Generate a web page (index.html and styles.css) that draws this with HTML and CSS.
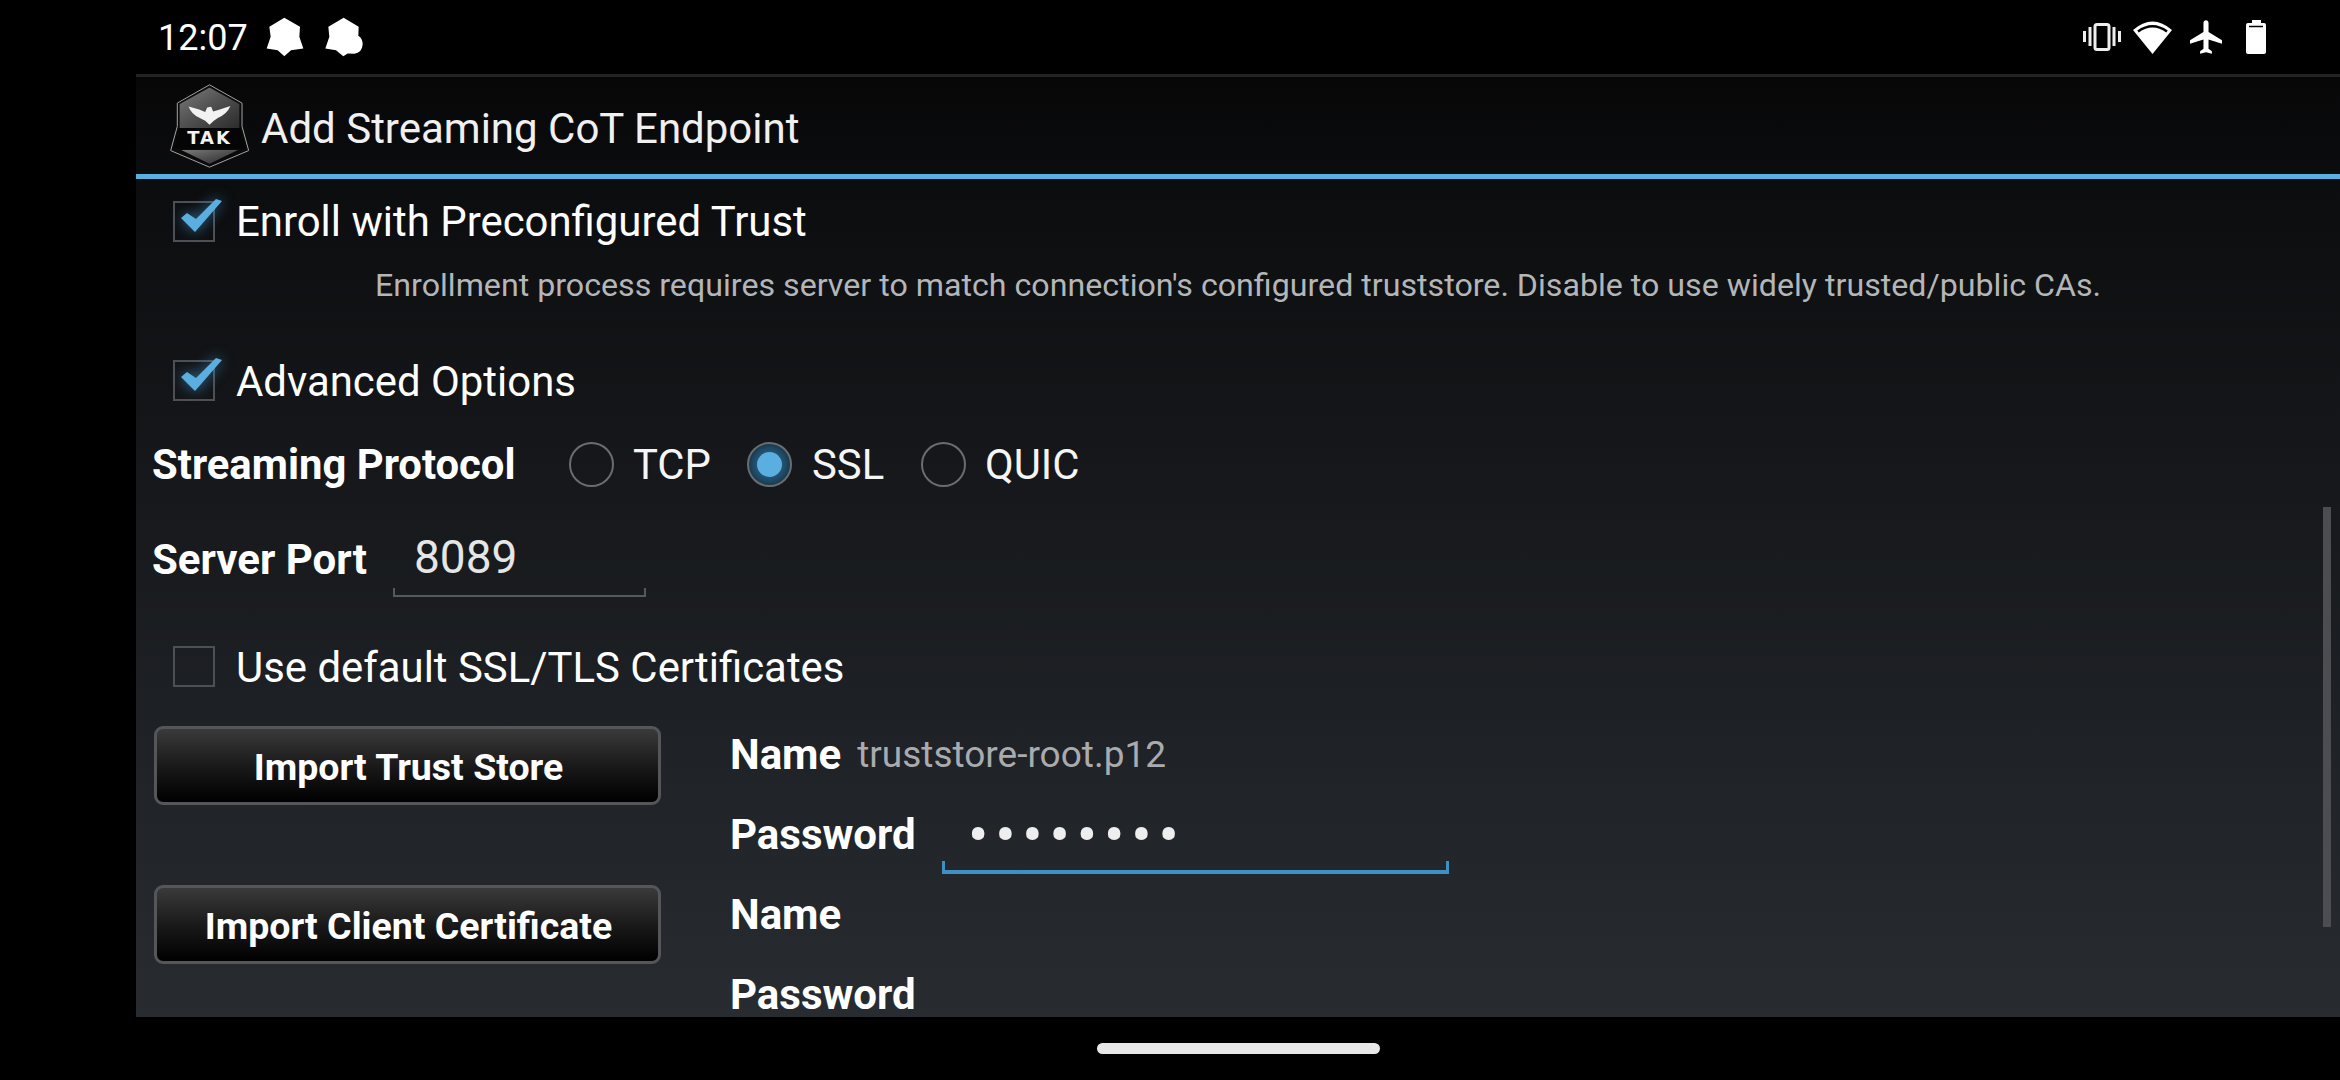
FILE: index.html
```html
<!DOCTYPE html>
<html lang="en">
<head>
<meta charset="utf-8">
<title>Add Streaming CoT Endpoint</title>
<link rel="stylesheet" href="styles.css">
</head>
<body>
<div class="screen">
  <header class="status">
    <span class="time">12:07</span>
    <svg class="note" viewBox="33 36 114 119"><path d="M88 38L135 65L133 95L145 130L108 135L88 153L68 135L35 130L47 95L43 65Z"/></svg>
    <svg class="note" viewBox="207 36 114 119"><path d="M263 38L308 65L307 92Q320 100 320 118Q318 143 295 146L275 145L262 153L240 135L208 130L220 95L217 65Z"/></svg>
    <span class="spacer"></span>
    <svg class="st-vib" viewBox="0 0 38 28"><path class="ln" d="M1.500 8V19M7 4V23M31 4V23M36.500 8V19"/><rect class="ln" x="12" y="1.500" width="14" height="25" rx="2"/></svg>
    <svg class="st-wifi" viewBox="0 0 39 33"><path d="M0 9Q19.500 -8 39 9L19.500 33Z"/><path class="gap" d="M5 10.500Q19.500 0 34 10.500"/></svg>
    <svg class="st-plane" viewBox="2 2 19 20"><path d="M21 16v-2l-8-5V3.500c0-.83-.67-1.500-1.500-1.500S10 2.670 10 3.500V9l-8 5v2l8-2.500V19l-2 1.500V22l3.500-1 3.500 1v-1.500L13 19v-5.500l8 2.500z"/></svg>
    <svg class="st-batt" viewBox="0 0 20 34"><path d="M6 0H15V3H18Q20 3 20 5V32Q20 34 18 34H2Q0 34 0 32V5Q0 3 2 3H6Z"/><path class="gap thin" d="M3 6.500H17"/></svg>
  </header>
  <div class="divider"></div>
  <main class="app">
    <div class="titlebar">
      <svg class="logo" viewBox="28 28 238 252">
        <defs>
          <linearGradient id="steel" x1="0" y1="0" x2="1" y2="1"><stop offset="0" stop-color="#7a7a7a"/><stop offset="0.5" stop-color="#505050"/><stop offset="1" stop-color="#2c2c2c"/></linearGradient>
        </defs>
        <path class="logo-edge" d="M147 30L245 85V155L265 228L147 278L30 228L50 155V85Z"/>
        <path fill="url(#steel)" d="M147 38L237 88V160H57V88Z"/>
        <path class="logo-band" d="M55 160H238L255 222H40Z"/>
        <path fill="url(#steel)" d="M62 226H233L147 268Z"/>
        <path class="logo-eagle" d="M84 95L116 104L134 112L140 98L152 96L158 110L178 104L210 94Q200 118 172 130L160 138L147 150L134 138L118 130Q92 118 84 95Z"/>
        <text class="logo-text" x="147" y="209" text-anchor="middle">TAK</text>
      </svg>
      <h1 class="title">Add Streaming CoT Endpoint</h1>
    </div>
    <div class="content">
      <div class="check-row first-row">
        <span class="box"><svg class="tick" viewBox="0 0 60 46"><path d="M7 21L13 16L22 22L42 2L48 4L21 35Z"/></svg></span>
        <span class="check-label">Enroll with Preconfigured Trust</span>
      </div>
      <p class="hint">Enrollment process requires server to match connection's configured truststore. Disable to use widely trusted/public CAs.</p>
      <div class="check-row adv-row">
        <span class="box"><svg class="tick" viewBox="0 0 60 46"><path d="M7 21L13 16L22 22L42 2L48 4L21 35Z"/></svg></span>
        <span class="check-label">Advanced Options</span>
      </div>
      <div class="proto-row">
        <span class="field-label proto-label">Streaming Protocol</span>
        <span class="radio"></span><span class="radio-label tcp">TCP</span>
        <span class="radio on"></span><span class="radio-label ssl">SSL</span>
        <span class="radio"></span><span class="radio-label">QUIC</span>
      </div>
      <div class="port-row">
        <span class="field-label port-label">Server Port</span>
        <div class="edit port-edit">
          <span class="edit-text">8089</span>
          <span class="ticks"></span>
        </div>
      </div>
      <div class="check-row default-row">
        <span class="box"></span>
        <span class="check-label">Use default SSL/TLS Certificates</span>
      </div>
      <section class="certs">
        <div class="cert-btns">
          <button class="btn">Import Trust Store</button>
          <button class="btn">Import Client Certificate</button>
        </div>
        <div class="cert-fields">
          <div class="cert-row"><span class="field-label">Name</span><span class="file">truststore-root.p12</span></div>
          <div class="cert-row"><span class="field-label">Password</span>
            <div class="edit pass-edit">
              <span class="dots">••••••••</span>
              <span class="ticks active"></span>
            </div>
          </div>
          <div class="cert-row"><span class="field-label">Name</span></div>
          <div class="cert-row"><span class="field-label">Password</span></div>
        </div>
      </section>
      <div class="scrollbar"></div>
    </div>
  </main>
  <footer class="nav"><span class="pill"></span></footer>
</div>
</body>
</html>
```
FILE: styles.css
```css
* { box-sizing: border-box; }
html, body { margin: 0; padding: 0; background: #000; }
body { font-family: Roboto, "Noto Sans", sans-serif; color: #fff; }
.screen { width: 2340px; height: 1080px; display: flex; flex-direction: column; padding-left: 136px; overflow: hidden; }

.status { height: 74px; display: flex; align-items: center; padding: 0 74px 0 22px; flex: none; }
.time { font-size: 36px; width: 108px; color: #fff; position: relative; top: 1px; }
.status svg { fill: #fff; flex: none; }
.note { width: 38px; height: 40px; margin-right: 21px; margin-top: -1px; }
.spacer { flex: 1; }
.st-vib { width: 38px; height: 28px; margin-right: 12px; }
.ln { fill: none; stroke: #eee; stroke-width: 3; }
.st-wifi { width: 39px; height: 33px; margin-right: 18px; }
.gap { fill: none; stroke: #000; stroke-width: 2.500; }
.gap.thin { stroke-width: 1.500; }
.st-plane { width: 32px; height: 34px; margin-right: 24px; }
.st-batt { width: 20px; height: 34px; }
.divider { height: 3px; background: #232323; flex: none; }

.app { height: 940px; flex: none; display: flex; flex-direction: column; background: linear-gradient(180deg, #070708 0%, #0c0d0f 12%, #282c31 100%); overflow: hidden; }
.titlebar { height: 102px; flex: none; border-bottom: 5px solid #5aafe0; display: flex; align-items: center; padding-left: 34px; }
.logo { width: 79px; height: 84px; flex: none; margin-top: 1px; }
.logo-edge { fill: #0a0a0a; stroke: #a5a5a5; stroke-width: 3; }
.logo-band { fill: #050505; }
.logo-eagle { fill: #f2f2f2; }
.logo-text { font-family: "DejaVu Sans", sans-serif; font-weight: 700; font-size: 54px; letter-spacing: 6px; fill: #f2f2f2; }
.title { margin: 6px 0 0 12px; font-size: 42px; font-weight: 400; color: #f0f0f0; line-height: 1; }

.content { position: relative; flex: 1; overflow: hidden; }
.check-row { display: flex; align-items: center; padding-left: 37px; height: 60px; }
.first-row { height: 84px; }
.adv-row { margin-top: 43px; }
.default-row { margin-top: 39px; }
.adv-row .check-label, .default-row .check-label { padding-top: 2px; }
.box { width: 42px; height: 41px; border: 2px solid #4d5054; position: relative; flex: none; margin-right: 21px; }
.tick { position: absolute; left: -1px; top: -6px; width: 60px; height: 46px; fill: #5aafe0; filter: drop-shadow(0 0 7px rgba(70, 160, 220, .7)); overflow: visible; }
.check-label { font-size: 41.900px; color: #fff; }
.hint { margin: 0; padding-left: 239px; height: 44px; line-height: 44px; font-size: 32.180px; color: #b4b6b8; }

.proto-row { display: flex; align-items: center; height: 60px; padding-left: 16px; margin-top: 24px; }
.field-label { font-size: 42px; font-weight: 700; color: #fff; }
.proto-label { width: 417px; font-size: 41.800px; }
.radio { width: 45px; height: 45px; border: 2px solid #6a6d70; border-radius: 50%; flex: none; margin-right: 19px; display: flex; align-items: center; justify-content: center; }
.radio.on { background: radial-gradient(circle, #2f7ba8 0, #1d4660 60%, #101820 100%); margin-right: 20px; }
.radio.on::after { content: ""; width: 25px; height: 25px; border-radius: 50%; background: #5aafe0; }
.radio-label { font-size: 41.800px; color: #f5f5f5; }
.tcp { width: 114px; }
.ssl { width: 109px; }

.port-row { display: flex; align-items: center; height: 76px; padding-left: 16px; margin-top: 27px; }
.port-label { width: 241px; }
.edit { display: flex; flex-direction: column; flex: none; }
.port-edit { width: 253px; height: 76px; }
.edit-text { flex: 1; display: flex; align-items: center; padding: 5px 0 0 21px; font-size: 46px; color: #e6e6e6; }
.ticks { display: block; height: 9px; border: solid #55585c; border-width: 0 2px 2px; flex: none; }
.ticks.active { height: 13px; border-color: #3d90c4; border-width: 0 3px 4px; }

.certs { display: grid; grid-template-columns: 576px 1fr; padding-left: 18px; margin-top: 18px; }
.cert-btns { display: flex; flex-direction: column; gap: 80px; padding-top: 12px; }
.btn { width: 507px; height: 79px; border: 3px solid #54565a; border-radius: 9px; background: linear-gradient(180deg, #3a3a3a 0%, #1a1a1a 50%, #000 100%); color: #fff; font-family: Roboto, sans-serif; font-weight: 700; font-size: 37.500px; padding: 2px 0 0 2px; }
.cert-row { display: flex; align-items: center; height: 80px; }
.file { font-size: 37px; color: #a9abae; margin-left: 16px; }
.pass-edit { width: 507px; height: 80px; margin-left: 26px; }
.dots { flex: 1; min-height: 0; display: flex; align-items: center; padding: 15px 0 0 26px; font-size: 62px; letter-spacing: 6.300px; color: #eee; line-height: 30px; }

.scrollbar { position: absolute; right: 9px; top: 328px; width: 8px; height: 420px; background: #4b4d50; }

.nav { flex: 1; display: flex; justify-content: center; align-items: flex-start; padding-top: 26px; }
.pill { width: 283px; height: 11px; border-radius: 6px; background: #e8e8e8; }
```
